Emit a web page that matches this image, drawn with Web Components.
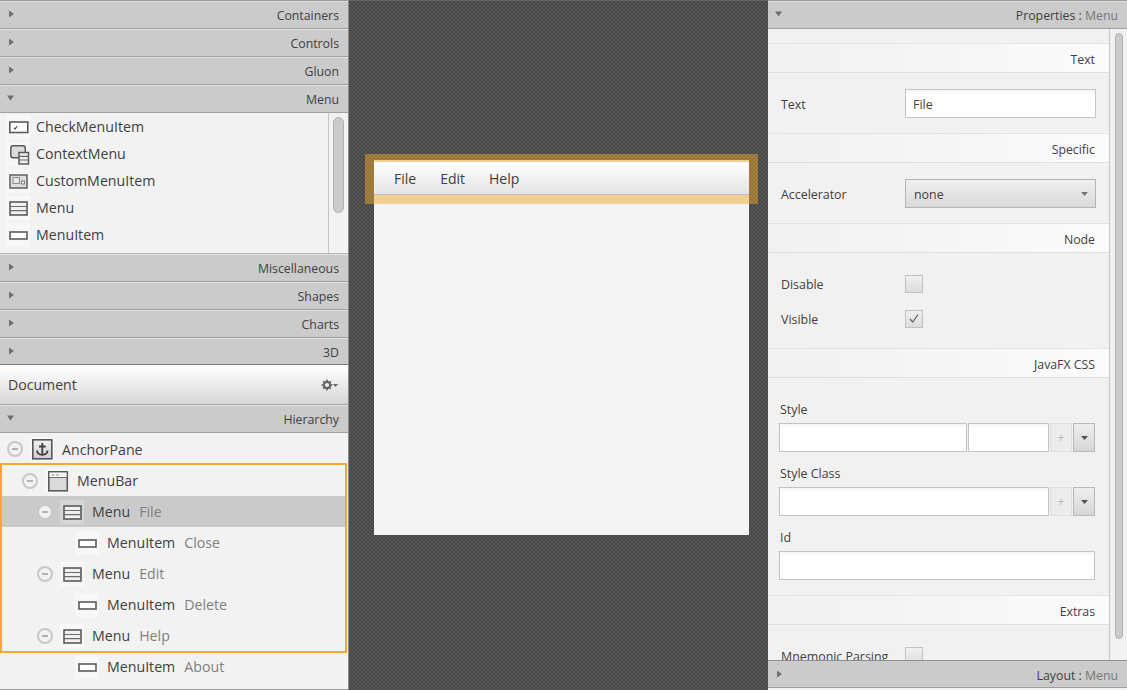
<!DOCTYPE html>
<html>
<head>
<meta charset="utf-8">
<title>Scene Builder</title>
<style>
  html, body { margin: 0; height: 100%; overflow: hidden; }
  body { font-family: "Open Sans", "Liberation Sans", sans-serif; font-size: 14px; color: #404040; }
</style>
</head>
<body>
<sb-app>
  <sb-left slot="left">
    <sb-titled label="Containers"></sb-titled>
    <sb-titled label="Controls"></sb-titled>
    <sb-titled label="Gluon"></sb-titled>
    <sb-titled label="Menu" open></sb-titled>
    <sb-library>
      <sb-lib-item icon="check">CheckMenuItem</sb-lib-item>
      <sb-lib-item icon="context">ContextMenu</sb-lib-item>
      <sb-lib-item icon="custom">CustomMenuItem</sb-lib-item>
      <sb-lib-item icon="menu">Menu</sb-lib-item>
      <sb-lib-item icon="item">MenuItem</sb-lib-item>
    </sb-library>
    <sb-titled label="Miscellaneous"></sb-titled>
    <sb-titled label="Shapes"></sb-titled>
    <sb-titled label="Charts"></sb-titled>
    <sb-titled label="3D"></sb-titled>
    <sb-document></sb-document>
    <sb-titled label="Hierarchy" open></sb-titled>
    <sb-tree>
      <sb-tree-row depth="0" icon="anchor" toggle style="height:32px">AnchorPane</sb-tree-row>
      <sb-tree-row depth="1" icon="menubar" toggle>MenuBar</sb-tree-row>
      <sb-tree-row depth="2" icon="menu" toggle selected note="File">Menu</sb-tree-row>
      <sb-tree-row depth="3" icon="item" note="Close">MenuItem</sb-tree-row>
      <sb-tree-row depth="2" icon="menu" toggle note="Edit">Menu</sb-tree-row>
      <sb-tree-row depth="3" icon="item" note="Delete">MenuItem</sb-tree-row>
      <sb-tree-row depth="2" icon="menu" toggle note="Help">Menu</sb-tree-row>
      <sb-tree-row depth="3" icon="item" note="About">MenuItem</sb-tree-row>
    </sb-tree>
  </sb-left>

  <sb-canvas slot="center">
    <sb-menubar>
      <sb-menu-label>File</sb-menu-label>
      <sb-menu-label>Edit</sb-menu-label>
      <sb-menu-label>Help</sb-menu-label>
    </sb-menubar>
  </sb-canvas>

  <sb-right slot="right">
    <sb-titled label="Properties" sub="Menu" open></sb-titled>
    <sb-inspector>
      <sb-section label="Text" h="60">
        <sb-row label="Text" pad="16"><sb-input w="191">File</sb-input></sb-row>
      </sb-section>
      <sb-section label="Specific" h="60">
        <sb-row label="Accelerator" pad="16"><sb-select>none</sb-select></sb-row>
      </sb-section>
      <sb-section label="Node" h="95">
        <sb-row label="Disable" pad="13" rowh="35"><sb-check></sb-check></sb-row>
        <sb-row label="Visible" rowh="35"><sb-check checked></sb-check></sb-row>
      </sb-section>
      <sb-section label="JavaFX CSS" h="217">
        <sb-stack label="Style" first>
          <sb-input w="188"></sb-input><sb-input w="81"></sb-input>
          <sb-plus></sb-plus><sb-drop></sb-drop>
        </sb-stack>
        <sb-stack label="Style Class">
          <sb-input w="270"></sb-input>
          <sb-plus></sb-plus><sb-drop></sb-drop>
        </sb-stack>
        <sb-stack label="Id">
          <sb-input w="316"></sb-input>
        </sb-stack>
      </sb-section>
      <sb-section label="Extras" h="60">
        <sb-row label="Mnemonic Parsing" pad="13" rowh="35"><sb-check></sb-check></sb-row>
      </sb-section>
    </sb-inspector>
    <sb-titled label="Layout" sub="Menu" style="--bar-top:#8f8f8f;--bar-pad:3px"></sb-titled>
  </sb-right>
</sb-app>

<script>
  // small helper, every element is just a shadow root with a style + markup
  function comp(name, css, html, setup) {
    customElements.define(name, class extends HTMLElement {
      constructor() {
        super();
        this.attachShadow({ mode: "open" });
      }
      connectedCallback() {
        const body = typeof html === "function" ? html(this) : html;
        this.shadowRoot.innerHTML = `<style>${css}</style>${body}`;
        if (setup) setup(this);
      }
    });
  }

  const ICONS = {
    check: `<rect x="3.800" y="7" width="18" height="10.500" fill="#fff" stroke="#5a5a5a" stroke-width="1.600"/><path d="M8 13l1.200 1L11 11" fill="none" stroke="#555" stroke-width="1.300"/>`,
    context: `<rect x="4.800" y="3.800" width="14.500" height="12" rx="2.500" fill="#dcdcdc" stroke="#5a5a5a" stroke-width="1.500"/><rect x="13" y="10.500" width="9.500" height="11.500" fill="#eee" stroke="#5a5a5a" stroke-width="1.500"/><path d="M13 14.300h9.500M13 18h9.500" stroke="#666" stroke-width="1.200"/>`,
    custom: `<rect x="4" y="6" width="17" height="13" fill="#dedede" stroke="#666" stroke-width="1.600"/><rect x="7" y="8.500" width="6.500" height="6" fill="#e8e8e8" stroke="#8c8c8c"/><rect x="15.500" y="12" width="3" height="3" fill="#eee" stroke="#7c7c7c"/>`,
    menu: `<rect x="4" y="6" width="17" height="13" fill="#f1f1f1" stroke="#5a5a5a" stroke-width="1.600"/><path d="M4 10.500h17M4 14.700h17" stroke="#6c6c6c" stroke-width="1.200"/>`,
    item: `<rect x="4" y="9" width="17" height="7" fill="#fff" stroke="#5a5a5a" stroke-width="1.600"/>`,
    anchor: `<defs><linearGradient id="ag" x1="0" y1="0" x2="0" y2="1"><stop offset="0" stop-color="#f0f0f0"/><stop offset="1" stop-color="#cfcfcf"/></linearGradient></defs><rect x="2.800" y="2.800" width="19" height="19" fill="url(#ag)" stroke="#555" stroke-width="1.600"/><path d="M12.300 6v11.500M9 9.500h6.600M7 13.500c.3 3 3 4.300 5.300 4.300s5-1.300 5.300-4.300" fill="none" stroke="#3f3f3f" stroke-width="1.800"/>`,
    menubar: `<rect x="3.800" y="2.800" width="18.500" height="19" fill="#dadada" stroke="#5a5a5a" stroke-width="1.600"/><rect x="4.600" y="3.600" width="16.900" height="4.400" fill="#f6f6f6"/><path d="M4 8.500h18" stroke="#6c6c6c"/><path d="M6.500 6h3M11 6h3" stroke="#8c8c8c"/>`
  };
  const icon = n => `<svg width="24" height="24" viewBox="0 0 24 24">${ICONS[n] || ""}</svg>`;

  comp("sb-app", `
    :host { display: grid; grid-template-columns: 349px 419px 359px; height: 690px; }
    ::slotted(*) { min-width: 0; }
  `, `<slot name="left"></slot><slot name="center"></slot><slot name="right"></slot>`);

  comp("sb-left", `
    :host { display: flex; flex-direction: column; height: 690px; overflow: hidden; box-sizing: border-box;
      border-right: 1px solid #8c8c8c; border-top: 1px solid #9a9a9a; background: #f2f2f2; }
  `, `<slot></slot>`);

  comp("sb-right", `
    :host { display: flex; flex-direction: column; height: 690px; overflow: hidden; box-sizing: border-box;
      border-top: 1px solid #9a9a9a; background: #f2f2f2; }
  `, `<slot></slot>`);

  comp("sb-titled", `
    :host { display: block; flex: none; }
    .bar { height: 28px; box-sizing: border-box; display: flex; align-items: center; justify-content: space-between;
      padding: var(--bar-pad, 1px) 9px 0 7px; background: #cbcbcb; border-top: 1px solid var(--bar-top, #e2e2e2); border-bottom: 1px solid #9f9f9f;
      font-size: 12.300px; color: #404040; }
    svg { display: block; margin-top: -4px; }
    .sub { color: #777; }
  `, el => {
    const open = el.hasAttribute("open");
    const sub = el.getAttribute("sub");
    const caret = open
      ? `<svg width="9" height="8"><path d="M0 1.500h7l-3.500 5z" fill="#6e6e6e"/></svg>`
      : `<svg width="9" height="8"><path d="M2 0.500v7l5-3.500z" fill="#6e6e6e"/></svg>`;
    const txt = el.getAttribute("label") + (sub ? ` : <span class="sub">${sub}</span>` : "");
    return `<div class="bar">${caret}<span>${txt}</span></div>`;
  });

  comp("sb-library", `
    :host { display: block; flex: none; height: 141px; box-sizing: border-box; position: relative;
      border-bottom: 1px solid #b8b8b8; background: #f2f2f2; }
    .track { position: absolute; left: 328px; top: 0; bottom: 0; width: 20px; border-left: 1px solid #c4c4c4; box-sizing: border-box; }
    .thumb { position: absolute; left: 4px; top: 4px; width: 11px; height: 96px; box-sizing: border-box;
      background: #cbcbcb; border: 1px solid #b0b0b0; border-radius: 6px; }
  `, `<slot></slot><div class="track"><div class="thumb"></div></div>`);

  comp("sb-lib-item", `
    :host { display: flex; align-items: center; height: 27px; padding-left: 6px; gap: 6px; font-size: 14.200px; color: #404040; }
    svg { background: #f7f7f7; flex: none; }
  `, el => `${icon(el.getAttribute("icon"))}<slot></slot>`);

  comp("sb-document", `
    :host { display: flex; flex: none; align-items: center; justify-content: space-between; height: 41px; box-sizing: border-box;
      margin-top: -2px; padding: 0 10px 0 8px; font-size: 14.100px; color: #404040; position: relative;
      background: linear-gradient(#fff, #f2f2f2 35%, #d6d6d6); border-top: 1px solid #7b7b7b; border-bottom: 1px solid #a6a6a6; }
  `, `<span>Document</span><svg width="17" height="12" viewBox="0 0 17 12">
      <circle cx="6" cy="6" r="3.200" fill="none" stroke="#666" stroke-width="2.200"/>
      <path d="M6 0.500v2M6 9.500v2M0.500 6h2M9.500 6h2M2.200 2.200l1.400 1.400M8.400 8.400l1.400 1.400M2.200 9.800l1.400-1.400M8.400 3.600l1.400-1.400" stroke="#666" stroke-width="1.500"/>
      <path d="M12 5h5l-2.500 3z" fill="#666"/></svg>`);

  comp("sb-tree", `
    :host { display: block; flex: 1; position: relative; overflow: hidden; background: #f2f2f2; border-bottom: 1px solid #9f9f9f; }
    .sel { position: absolute; left: 0; top: 30px; width: 347px; height: 190px; box-sizing: border-box; border: 2px solid #f4a92c; pointer-events: none; }
  `, `<slot></slot><div class="sel"></div>`);

  comp("sb-tree-row", `
    :host { display: flex; align-items: center; height: 31px; position: relative; font-size: 14.200px; color: #404040; }
    :host([selected]) { background: #cacaca; width: 347px; }
    .tog { width: 16px; height: 16px; box-sizing: border-box; border: 2px solid #c8c8c8; border-radius: 50%; background: #f2f2f2;
      display: flex; align-items: center; justify-content: center; flex: none; margin-right: 7px; }
    .tog i { display: block; width: 6px; height: 2px; background: #b0b0b0; }
    .gap { width: 16px; flex: none; margin-right: 7px; }
    svg { flex: none; background: #f7f7f7; margin-right: 8px; }
    :host([selected]) svg { background: #d6d6d6; }
    .note { color: #808080; margin-left: 9px; }
  `, el => {
    const d = +el.getAttribute("depth");
    const t = el.hasAttribute("toggle") ? `<div class="tog"><i></i></div>` : `<div class="gap"></div>`;
    const note = el.getAttribute("note");
    return `<div style="width:${7 + d * 15}px;flex:none"></div>${t}${icon(el.getAttribute("icon"))}<slot></slot>${note ? `<span class="note">${note}</span>` : ""}`;
  });

  comp("sb-canvas", `
    :host { display: block; height: 690px; box-sizing: border-box; padding: 160px 0 0 25px; border-top: 1px solid #666;
      background-color: #4c4c4c;
      background-image: conic-gradient(#555 25%, #484848 0 50%, #555 0 75%, #484848 0);
      background-size: 4px 4px; }
    .pane { width: 375px; height: 375px; background: #f4f4f4; position: relative; margin-top: -1px; padding-top: 2px; box-sizing: border-box; }
    .tint { position: absolute; left: -9px; top: -6px; width: 393px; height: 50px; background: rgba(240, 168, 42, .485); }
    .bar { position: relative; }
  `, `<div class="pane"><div class="tint"></div><div class="bar"><slot></slot></div></div>`);

  comp("sb-menubar", `
    :host { display: flex; height: 33px; box-sizing: border-box; padding-left: 8px; align-items: center;
      background: linear-gradient(#fff, #e3e3e3); border-bottom: 1px solid #bdbdbd; }
  `, `<slot></slot>`);

  comp("sb-menu-label", `
    :host { display: block; padding: 0 12px; font-size: 14px; color: #404040; }
  `, `<slot></slot>`);

  comp("sb-inspector", `
    :host { display: flex; flex: none; height: 631px; overflow: hidden; position: relative; background: #f1f1f1; }
    .scroll { width: 342px; height: 631px; overflow: hidden; padding-top: 14px; box-sizing: border-box; border-right: 1px solid #c4c4c4; flex: none; }
    .track { flex: 1; position: relative; }
    .thumb { position: absolute; left: 5px; top: 4px; width: 8px; height: 606px; box-sizing: border-box; background: #cbcbcb; border: 1px solid #b0b0b0; border-radius: 5px; }
  `, `<div class="scroll"><slot></slot></div><div class="track"><div class="thumb"></div></div>`);

  comp("sb-section", `
    :host { display: block; }
    .head { height: 30px; box-sizing: border-box; display: flex; align-items: center; justify-content: flex-end; padding: 2px 14px 0 0;
      font-size: 12.300px; color: #404040; background: linear-gradient(90deg, #f1f1f1, #f3f3f3 30%, #fbfbfb);
      border-top: 1px solid #e3e3e3; border-bottom: 1px solid #dfdfdf; }
    .body { box-sizing: border-box; display: flow-root; }
  `, el => `<div class="head">${el.getAttribute("label")}</div><div class="body" style="height:${el.getAttribute("h")}px"><slot></slot></div>`);

  comp("sb-row", `
    :host { display: flex; align-items: center; padding-left: 13px; font-size: 12.400px; color: #404040; }
    .l { width: 124px; flex: none; padding-top: 2px; }
  `, `<div class="l"></div><slot></slot>`, el => {
    el.shadowRoot.querySelector(".l").textContent = el.getAttribute("label");
    if (el.getAttribute("rowh")) el.style.height = el.getAttribute("rowh") + "px";
    if (el.getAttribute("pad")) el.style.marginTop = el.getAttribute("pad") + "px";
  });

  comp("sb-stack", `
    :host { display: block; padding-left: 11px; font-size: 12.400px; color: #404040; }
    .l { height: 18px; line-height: 18px; margin: 0 0 4px 1px; }
    .f { display: flex; gap: 1px; height: 29px; margin-bottom: 13px; }
  `, el => `<div class="l">${el.getAttribute("label")}</div><div class="f"><slot></slot></div>`, el => {
    if (el.hasAttribute("first")) el.style.paddingTop = "23px";
  });

  comp("sb-input", `
    :host { display: flex; align-items: center; flex: none; height: 29px; box-sizing: border-box; padding: 1px 0 0 7px;
      background: linear-gradient(#f4f4f4, #fff 4px); border: 1px solid #c4c4c4; font-size: 12.400px; color: #404040; }
  `, `<slot></slot>`, el => { el.style.width = el.getAttribute("w") + "px"; });

  comp("sb-select", `
    :host { display: flex; align-items: center; justify-content: space-between; flex: none; width: 191px; height: 29px; box-sizing: border-box;
      padding: 1px 7px 0 8px; background: linear-gradient(#f0f0f0, #d9d9d9); border: 1px solid #b4b4b4; font-size: 12.400px; color: #404040; }
  `, `<slot></slot><svg width="7" height="4"><path d="M0 0h7l-3.500 4z" fill="#777"/></svg>`);

  comp("sb-check", `
    :host { display: flex; align-items: center; justify-content: center; width: 18px; height: 18px; box-sizing: border-box;
      background: linear-gradient(#f0f0f0, #dcdcdc); border: 1px solid #c0c0c0; }
  `, el => el.hasAttribute("checked")
    ? `<svg width="12" height="11"><path d="M2 6l2.800 3L10 1.500" fill="none" stroke="#666" stroke-width="1.300"/></svg>` : "");

  comp("sb-plus", `
    :host { display: flex; align-items: center; justify-content: center; flex: none; width: 22px; height: 29px; box-sizing: border-box;
      background: #ececec; border: 1px solid #e0e0e0; color: #bcbcbc; font-size: 12px; }
  `, `+`);

  comp("sb-drop", `
    :host { display: flex; align-items: center; justify-content: center; flex: none; width: 22px; height: 29px; box-sizing: border-box;
      background: linear-gradient(#eeeeee, #d6d6d6); border: 1px solid #b8b8b8; }
  `, `<svg width="7" height="4"><path d="M0 0h7l-3.500 4z" fill="#555"/></svg>`);
</script>
</body>
</html>
